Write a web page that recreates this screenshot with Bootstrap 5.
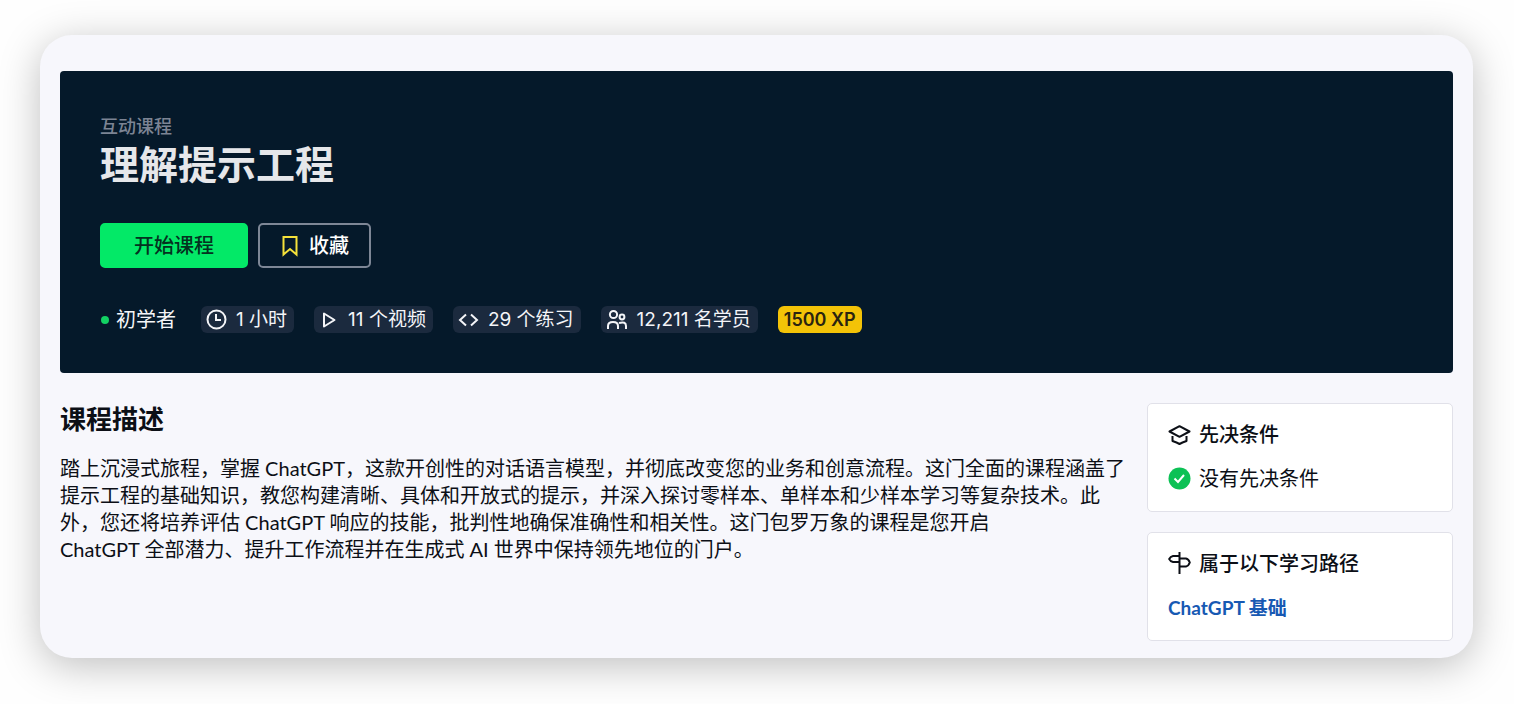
<!DOCTYPE html>
<html lang="zh-CN">
<head>
<meta charset="utf-8">
<meta name="viewport" content="width=device-width, initial-scale=1">
<title>理解提示工程</title>
<link href="https://cdn.jsdelivr.net/npm/bootstrap@5.3.0/dist/css/bootstrap.min.css" rel="stylesheet">
<style>
  body { background: #fefefe; color: #0c0f16; font-family: Lato, "Noto Sans CJK SC", sans-serif; font-size: 20px; line-height: 27px; }
  .page-wrap { padding: 35px 41px 46px 40px; }
  .panel { background: #f7f7fc; border-radius: 32px; padding: 36px 20px 17px; box-shadow: 0 8px 40px rgba(0,0,0,.25); }
  .hero { background: #05192a; color: #f4f5f8; border-radius: 4px; padding: 40px; }
  .eyebrow { font-size: 18px; line-height: 31px; font-weight: 500; color: #7c8494; }
  .hero h1 { font-size: 39px; line-height: 44px; font-weight: 700; color: #e6e7ea; margin-bottom: 37px; }
  .actions { gap: 10px; }
  .hero .btn { height: 45px; font-size: 20px; line-height: 27px; font-weight: 500; border-radius: 5px; padding: 0 20px; border-width: 2px; }
  .hero .btn-start { --bs-btn-bg: #03e967; --bs-btn-hover-bg: #02d05c; --bs-btn-border-color: #03e967; --bs-btn-color: #04321f; width: 148px; padding: 0; }
  .hero .btn-save { --bs-btn-border-color: #7e8796; --bs-btn-color: #fff; --bs-btn-hover-color: #fff; --bs-btn-hover-border-color: #fff; gap: 9px; }
  .bookmark { stroke: #f5e13a; }
  .facts { gap: 20px; margin-top: 38px; }
  .pill { background: #1b2a3e; border-radius: 6px; height: 27px; padding: 0 7px 0 5px; gap: 9px; }
  .numeric { font-family: Inter, "Noto Sans CJK SC", sans-serif; font-size: 19px; }
  .level { gap: 7px; margin-right: 5px; padding-left: 1px; }
  .level-dot { width: 8px; height: 8px; border-radius: 50%; background: #12d163; }
  .xp { background: #f3c307; color: #2a2410; border-radius: 6px; height: 27px; padding: 0 6px; font-weight: 600; font-size: 18px; }
  .course-body { gap: 20px; margin-top: 30px; }
  .course-body h2 { font-size: 26px; line-height: 32px; font-weight: 700; margin-bottom: 20px; }
  .side-col { width: 306px; gap: 20px; }
  .side-card { background: #fff; border: 1px solid #e1e1e9; border-radius: 5px; padding: 17px 20px 19px; gap: 17px; }
  .side-card h3 { font-size: 20px; line-height: 27px; font-weight: 500; }
  .side-card a { color: #1759b3; font-weight: 700; font-size: 19px; }
  svg { flex: none; fill: none; stroke: currentColor; }
</style>
</head>
<body>
<div class="page-wrap">
  <main class="panel">
    <header class="hero">
      <div class="eyebrow">互动课程</div>
      <h1>理解提示工程</h1>
      <div class="d-flex flex-wrap actions">
        <button type="button" class="btn btn-start">开始课程</button>
        <button type="button" class="btn btn-save d-flex align-items-center">
          <svg class="bookmark" width="20" height="22" viewBox="0 0 20 22" stroke-width="2" aria-hidden="true"><path d="M3.500 2h13v17.500L10 14l-6.500 5.500z"/></svg>收藏
        </button>
      </div>
      <div class="facts d-flex flex-wrap align-items-center">
        <div class="level d-flex align-items-center"><span class="level-dot"></span>初学者</div>
        <div class="pill d-flex align-items-center">
          <svg width="21" height="21" viewBox="0 0 21 21" stroke-width="2" aria-hidden="true"><circle cx="10.500" cy="10.500" r="9"/><path d="M10 5v6h5"/></svg>
          <span class="numeric">1 小时</span>
        </div>
        <div class="pill d-flex align-items-center">
          <svg width="20" height="20" viewBox="0 0 20 20" stroke-width="2" stroke-linejoin="round" aria-hidden="true"><path d="M5 3.500v13L15.500 10z"/></svg>
          <span class="numeric">11 个视频</span>
        </div>
        <div class="pill d-flex align-items-center">
          <svg width="21" height="20" viewBox="0 0 21 20" stroke-width="2" aria-hidden="true"><path d="M8 4.500L2 10l6 5.500M13 4.500l6 5.500-6 5.500"/></svg>
          <span class="numeric">29 个练习</span>
        </div>
        <div class="pill d-flex align-items-center">
          <svg width="22" height="22" viewBox="0 0 22 22" stroke-width="2" aria-hidden="true"><circle cx="7.500" cy="5.500" r="3.600"/><circle cx="16" cy="8" r="2.400"/><path d="M2 20v-3q0-4 5-4t5 4v3M13 14q7-2 7 3v3"/></svg>
          <span class="numeric">12,211 名学员</span>
        </div>
        <div class="xp numeric d-flex align-items-center">1500 XP</div>
      </div>
    </header>
    <div class="course-body d-flex">
      <section class="flex-fill">
        <h2>课程描述</h2>
        <p class="mb-0">踏上沉浸式旅程，掌握 ChatGPT，这款开创性的对话语言模型，并彻底改变您的业务和创意流程。这门全面的课程涵盖了提示工程的基础知识，教您构建清晰、具体和开放式的提示，并深入探讨零样本、单样本和少样本学习等复杂技术。此外，您还将培养评估 ChatGPT 响应的技能，批判性地确保准确性和相关性。这门包罗万象的课程是您开启<br>ChatGPT 全部潜力、提升工作流程并在生成式 AI 世界中保持领先地位的门户。</p>
      </section>
      <aside class="side-col d-flex flex-column flex-shrink-0">
        <section class="side-card d-flex flex-column">
          <div class="d-flex align-items-center gap-2">
            <svg width="23" height="20" viewBox="0 0 23 20" stroke-width="2" stroke-linejoin="round" aria-hidden="true"><path d="M11.500 1.200L21.500 6.500 11.500 11.800 1.500 6.500zM4.500 11v5l4 1.500 3 1.500 3-1.500 4-1.500v-5"/></svg>
            <h3 class="mb-0">先决条件</h3>
          </div>
          <div class="d-flex align-items-center gap-2">
            <svg width="23" height="23" viewBox="0 0 23 23" stroke-width="2" aria-hidden="true"><circle cx="11.500" cy="11.500" r="11" fill="#0cc155" stroke="none"/><path d="M6.500 11.500l3.500 3.500 6-7" stroke="#fff"/></svg>
            <span>没有先决条件</span>
          </div>
        </section>
        <section class="side-card d-flex flex-column">
          <div class="d-flex align-items-center gap-2">
            <svg width="23" height="23" viewBox="0 0 23 23" stroke-width="2" stroke-linejoin="round" aria-hidden="true"><path d="M11.500 0v22M11.500 4H5Q2.500 4.500 1.200 7 2.500 9.500 5 10h6.500M11.500 6.500H18q2.500.500 3.800 4Q20.500 14 18 14.500h-6.500"/></svg>
            <h3 class="mb-0">属于以下学习路径</h3>
          </div>
          <div><a href="#" class="text-decoration-none">ChatGPT 基础</a></div>
        </section>
      </aside>
    </div>
  </main>
</div>
<script src="https://cdn.jsdelivr.net/npm/bootstrap@5.3.0/dist/js/bootstrap.bundle.min.js"></script>
</body>
</html>
